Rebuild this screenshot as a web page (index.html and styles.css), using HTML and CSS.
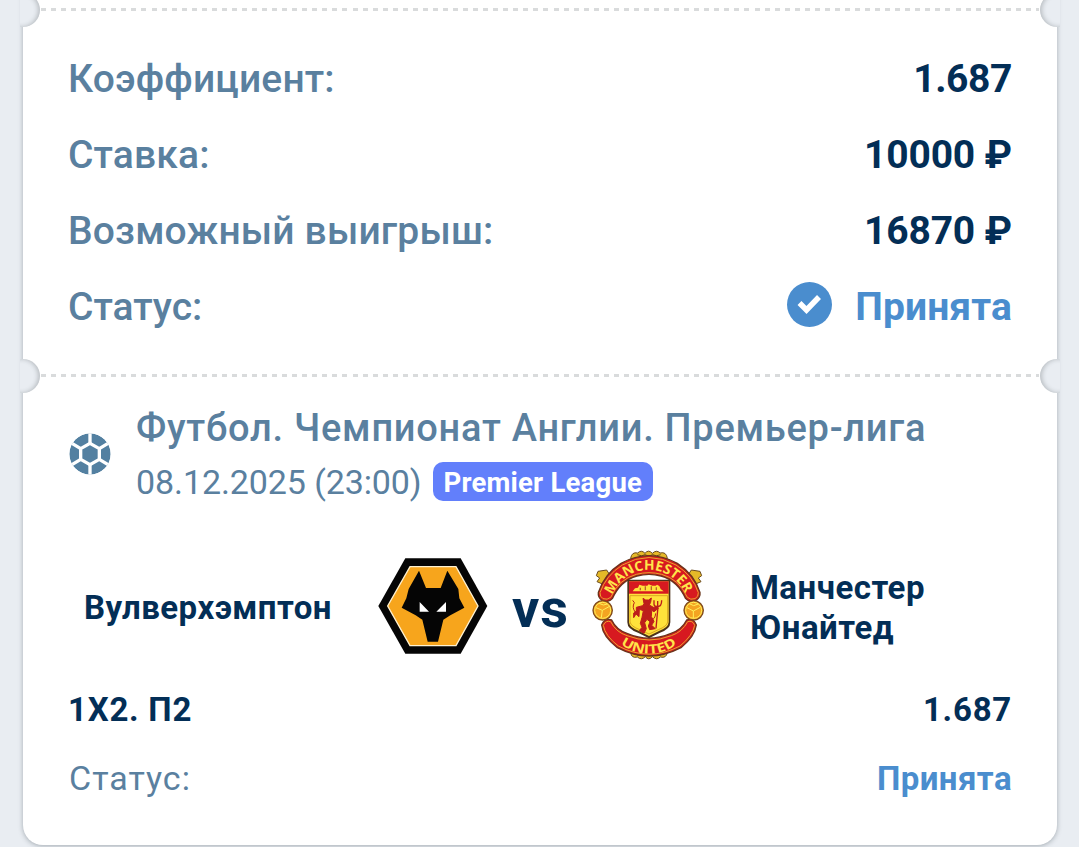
FILE: index.html
```html
<!DOCTYPE html>
<html lang="ru">
<head>
<meta charset="utf-8">
<title>Купон</title>
<link rel="stylesheet" href="styles.css">
</head>
<body>
<main class="ticket">
  <div class="divider"><i class="notch notch-left"></i><i class="notch notch-right"></i></div>
  <section class="summary">
    <div class="row"><span class="label">Коэффициент:</span><span class="value odds">1.687</span></div>
    <div class="row"><span class="label">Ставка:</span><span class="value">10000 ₽</span></div>
    <div class="row"><span class="label">Возможный выигрыш:</span><span class="value">16870 ₽</span></div>
    <div class="row"><span class="label status-label">Статус:</span>
      <span class="status">
        <svg class="check" viewBox="0 0 45 45"><circle cx="22.5" cy="22.5" r="22.5" fill="#4a8dce"/><path d="M12.5 21l7 7L32 15" fill="none" stroke="#fff" stroke-width="5.5"/></svg>
        <span class="accepted">Принята</span>
      </span>
    </div>
  </section>
  <div class="divider"><i class="notch notch-left"></i><i class="notch notch-right"></i></div>
  <section class="event">
    <header class="event-head">
      <svg class="ball" viewBox="0 0 126 126">
        <clipPath id="ball-clip"><circle cx="63" cy="63" r="62"/></clipPath>
        <g clip-path="url(#ball-clip)">
          <circle cx="63" cy="63" r="62" fill="#5380a1"/>
          <g fill="none" stroke="#fff" stroke-width="10">
            <path d="M63 31L91 47V79L63 95L35 79V47Z"/>
            <path d="M63 0V31M91 47L122 28M91 79L122 98M63 95V126M35 79L4 98M35 47L4 28"/>
          </g>
        </g>
      </svg>
      <div class="event-text">
        <div class="league">Футбол. Чемпионат Англии. Премьер-лига</div>
        <div class="meta"><span class="date">08.12.2025 (23:00)</span><span class="badge">Premier League</span></div>
      </div>
    </header>
    <div class="match">
      <div class="team home">Вулверхэмптон</div>
      <svg class="wolves" viewBox="0 0 375 360">
        <path d="M106 40H272L352 183L272 326H106L25 183Z" fill="#050505"/>
        <path d="M120 65H258L324 183L258 302H120L53 183Z" fill="#f7a51c" stroke="#fff1cf" stroke-width="4"/>
        <path d="M147 77L168 129H212L232 77L265 132L268 160L283 188L241 211L220 224L204 290H173L157 224L137 211L95 188L109 160L116 132Z" fill="#050505"/>
        <path d="M149 171L177 200H149ZM228 171L199 200H228Z" fill="#fff"/>
      </svg>
      <div class="vs">vs</div>
      <svg class="united" viewBox="0 0 390 390">
        <defs>
          <path id="arc-top" d="M82 165A118 118 0 0 1 302 165"/>
          <path id="arc-bottom" d="M88 295A142 142 0 0 0 297 295"/>
        </defs>
        <g fill="#e5b928" stroke="#6a4a20" stroke-width="3">
          <path d="M137 55Q140 35 158 39Q169 28 180 40Q190 27 202 40Q215 28 225 39Q244 34 247 55L240 65H144Z"/>
          <path d="M137 337Q139 356 157 351Q169 362 181 350Q191 363 202 350Q215 362 226 351Q244 356 247 337L240 325H144Z"/>
          <path d="M39 94L65 90L76 107L52 132L36 125L44 114L34 107Z"/>
          <path d="M345 94L319 90L308 107L332 132L348 125L340 114L350 107Z"/>
          <path d="M157 44Q171 51 180 44Q191 53 203 44Q213 51 227 44M157 347Q170 338 181 347Q191 338 203 347Q214 338 227 347" fill="none"/>
        </g>
        <path d="M40 157Q58 102 108 70Q192 24 277 70Q328 103 345 157Q347 173 332 182Q315 190 302 176Q278 122 228 108Q192 98 156 108Q106 122 82 176Q70 190 52 182Q38 173 40 157Z" fill="#d71920" stroke="#69351a" stroke-width="4"/>
        <path d="M45 158Q63 106 112 75Q192 30 273 75Q323 106 340 158Q341 170 330 176Q317 181 307 172Q282 117 230 103Q192 93 154 103Q102 117 77 172Q67 181 54 176Q44 170 45 158Z" fill="none" stroke="#e8a72c" stroke-width="3"/>
        <path d="M50 255Q59 233 80 240Q94 270 128 281Q192 308 256 281Q290 270 305 240Q326 233 334 255Q330 289 288 323Q192 373 97 323Q53 289 50 255Z" fill="#d71920" stroke="#69351a" stroke-width="4"/>
        <path d="M55 256Q62 240 77 245Q92 276 126 287Q192 313 259 287Q292 276 308 245Q323 240 329 256Q323 287 285 318Q192 367 100 318Q60 287 55 256Z" fill="none" stroke="#e8a72c" stroke-width="3"/>
        <path d="M127 119H256V247Q256 268 225 278L192 295L159 278Q127 268 127 247Z" fill="#4b321a"/>
        <path d="M132 124H251V247Q250 263 222 273L192 288L162 273Q133 263 132 247Z" fill="#ffe23b"/>
        <path d="M132 124H251V161H132Z" fill="#d71920"/>
        <path d="M143 154L150 145L159 143L163 134L173 137H187L191 133L202 137H212L216 134L223 138L227 147L236 154Z" fill="#ffe23b"/>
        <path d="M166 143V151M181 139V151M199 139V151M214 142V151" stroke="#bb612a" stroke-width="4"/>
        <path d="M135 167H248V246Q246 259 220 269L192 282L164 269Q138 259 135 246Z" fill="none" stroke="#dba620" stroke-width="3"/>
        <path d="M174 175L182 180H191L199 174L197 187L193 195L207 203L214 198L220 205L207 215L200 211L199 230L207 244L200 256L211 266L194 269L190 258L195 245L186 238L179 248L184 266L177 280L163 272L171 262L166 250L171 232L175 212L163 208L162 230L153 222L146 233L146 219L154 213V202L173 197L177 191Z" fill="#bd1d1b" stroke="#bd1d1b" stroke-width="3"/>
        <path d="M207 181V193Q208 201 218 200V183V200Q230 200 230 181M219 200L213 265" fill="none" stroke="#bd1d1b" stroke-width="4"/>
        <path d="M151 217Q140 202 148 188L143 181M194 244Q211 238 212 220" fill="none" stroke="#bd1d1b" stroke-width="3"/>
        <g fill="#f4a421" stroke="#7c4a1c" stroke-width="4"><circle cx="53" cy="211" r="29"/><circle cx="326" cy="211" r="29"/></g>
        <g fill="none" stroke="#fff05a" stroke-width="3"><circle cx="53" cy="211" r="24"/><circle cx="326" cy="211" r="24"/><path d="M33 203L52 211L72 200M52 211L49 233M42 190L55 195L67 192M306 203L325 213L346 202M325 213V234M313 191L326 197L340 192"/></g>
        <text class="crest-text"><textPath href="#arc-top" textLength="278" lengthAdjust="spacingAndGlyphs">MANCHESTER</textPath></text>
        <text class="crest-text crest-small"><textPath href="#arc-bottom" startOffset="26" textLength="180" lengthAdjust="spacingAndGlyphs">UNITED</textPath></text>
      </svg>
      <div class="team away">Манчестер<br>Юнайтед</div>
    </div>
    <div class="line pick"><span>1X2. П2</span><span>1.687</span></div>
    <div class="line result"><span class="result-label">Статус:</span><span class="accepted">Принята</span></div>
  </section>
</main>
</body>
</html>
```
FILE: styles.css
```css
* { box-sizing: border-box; }
body { margin: 0; height: 847px; overflow: hidden; background: #e9edf2; font-family: Roboto, sans-serif; color: #032e56; }
.ticket { width: 1034px; height: 865px; margin: -20px 0 0 23px; padding-top: 28px; background: #fff; border-radius: 20px; box-shadow: 0 1px 5px rgba(70, 80, 90, .42); }
.divider { position: relative; height: 3px; margin: 0 18px; background: repeating-linear-gradient(90deg, #d9dbdc 0 5px, transparent 5px 10.05px); }
.notch { position: absolute; top: -15px; width: 34px; height: 34px; border-radius: 50%; background: #e9edf2; }
.notch-left { left: -35px; box-shadow: inset -2px 0 4px rgba(80, 85, 90, .3); clip-path: inset(0 0 0 14px); }
.notch-right { right: -35px; box-shadow: inset 2px 0 4px rgba(80, 85, 90, .3); clip-path: inset(0 14px 0 0); }
.summary { height: 363px; padding: 30px 45px 0; }
.row { display: flex; justify-content: space-between; height: 76px; line-height: 76px; font-size: 39px; }
.label { font-weight: 500; color: #5a809f; letter-spacing: .15px; }
.status-label { letter-spacing: 0; }
.value { font-weight: 700; letter-spacing: -.15px; }
.odds { letter-spacing: -.4px; }
.status { display: flex; align-items: center; gap: 23px; letter-spacing: .12px; }
.check { width: 45px; height: 45px; margin-bottom: 5px; }
.accepted { font-weight: 700; color: #4a8dce; }
.event { padding: 25px 45px 0; }
.event-head { display: flex; height: 138px; }
.ball { width: 42px; height: 42px; margin: 31px 25px 0 1px; }
.league { height: 54px; line-height: 53px; font-size: 38px; font-weight: 500; color: #5a809f; letter-spacing: .74px; white-space: nowrap; }
.meta { display: flex; align-items: center; height: 52px; color: #5a809f; font-size: 34px; }
.date { letter-spacing: -.1px; }
.badge { width: 220px; height: 39px; margin: -1px 0 0 11px; padding-left: 11px; line-height: 42px; border-radius: 10px; background: #627ffb; color: #fff; font-size: 27.5px; font-weight: 700; letter-spacing: .2px; white-space: nowrap; }
.match { display: flex; align-items: center; height: 130px; }
.team { padding-top: 6px; font-size: 33px; font-weight: 700; line-height: 40px; letter-spacing: .48px; white-space: nowrap; }
.home { width: 302px; padding-left: 16px; }
.wolves { width: 125px; height: 120px; }
.vs { width: 90px; padding: 7px 0 0 17px; font-size: 54px; font-weight: 700; line-height: 60px; letter-spacing: .8px; }
.united { width: 130px; height: 130px; }
.away { padding-left: 35px; }
.crest-text { font-family: "Open Sans", sans-serif; font-size: 41px; font-weight: 700; fill: #ffe54a; }
.crest-small { font-size: 38px; }
.line { display: flex; justify-content: space-between; height: 70px; line-height: 70px; font-size: 33px; }
.pick { margin-top: 5px; font-weight: 700; letter-spacing: .75px; }
.result { line-height: 68px; letter-spacing: .45px; }
.result-label { padding-left: 1px; line-height: 66px; font-size: 34px; color: #5a809f; letter-spacing: 1px; }
```
